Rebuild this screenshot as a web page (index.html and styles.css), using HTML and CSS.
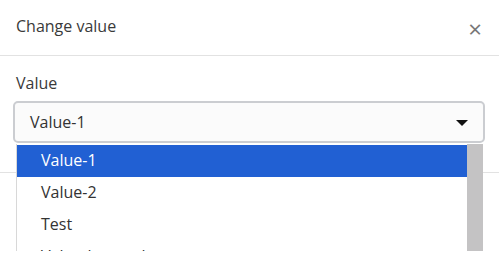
FILE: index.html
```html
<!DOCTYPE html>
<html lang="en">
<head>
  <meta charset="UTF-8">
  <title>Change value</title>
  <link rel="stylesheet" href="styles.css">
</head>
<body>
  <div class="modal">
    <div class="modal-header">
      <span class="modal-title">Change value</span>
      <span class="close">&times;</span>
    </div>
    <div class="modal-body">
      <label class="field-label">Value</label>
      <div class="select-wrap">
        <div class="select">
          <span class="select-value">Value-1</span>
          <span class="caret"></span>
        </div>
        <div class="dropdown">
          <ul class="options">
            <li class="selected">Value-1</li>
            <li>Value-2</li>
            <li>Test</li>
            <li>Value-long-value</li>
          </ul>
          <div class="scrollbar"></div>
        </div>
      </div>
    </div>
    <div class="modal-footer"></div>
  </div>
</body>
</html>
```

FILE: styles.css
```css
body {
  margin: 0;
  font-family: "Open Sans", Lato, sans-serif;
  color: #333;
  background: #fff;
}
.modal {
  width: 499px;
  height: 257px;
  overflow: hidden;
}
.modal-header {
  height: 55px;
  display: flex;
  align-items: center;
  justify-content: space-between;
  padding: 0 16px;
  border-bottom: 1px solid #e2e2e2;
}
.modal-title {
  font-size: 16px;
  color: #3a3a3a;
  margin-top: -3px;
}
.close {
  font-size: 24px;
  color: #777;
  margin-right: 1px;
  margin-top: 2px;
}
.modal-body {
  padding: 17px 14px 29px 13px;
}
.field-label {
  display: block;
  font-size: 16px;
  line-height: 21px;
  color: #3a3a3a;
  margin-left: 3px;
  margin-bottom: 7px;
}
.select-wrap {
  position: relative;
}
.select {
  height: 38px;
  border: 2px solid #cbcdd1;
  border-radius: 5px;
  background: #fbfbfb;
  display: flex;
  align-items: center;
  justify-content: space-between;
  padding: 0 15px 0 15px;
  font-size: 16px;
  color: #333;
}
.caret {
  width: 0;
  height: 0;
  border-left: 6px solid transparent;
  border-right: 6px solid transparent;
  border-top: 6px solid #111;
  margin-top: 2px;
}
.dropdown {
  position: absolute;
  top: 43px;
  left: 3px;
  width: 466px;
  height: 107px;
  background: #fff;
  border-left: 1px solid #d8d8d8;
  display: flex;
  z-index: 2;
}
.options {
  list-style: none;
  margin: 0;
  padding: 1px 0 0;
  flex: 1;
  overflow: hidden;
}
.options li {
  height: 32px;
  line-height: 31px;
  padding-left: 24px;
  font-size: 16px;
  color: #333;
}
.options li.selected {
  background: #2160d3;
  color: #fff;
}
.scrollbar {
  width: 16px;
  background: #c4c3c4;
}
.modal-footer {
  border-top: 1px solid #e2e2e2;
}
```
